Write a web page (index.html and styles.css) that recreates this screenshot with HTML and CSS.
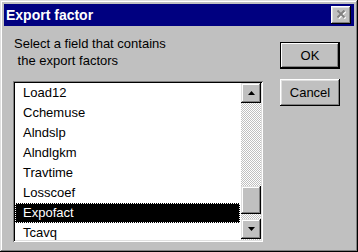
FILE: index.html
```html
<!DOCTYPE html>
<html lang="en">
<head>
    <meta charset="UTF-8">
    <title>Export factor</title>
    <link rel="stylesheet" href="styles.css">
</head>
<body>
    <div class="dialog">
        <div class="titlebar">
            <span class="title">Export factor</span>
            <button class="close">
                <svg width="10" height="9" viewBox="0 0 10 9">
                    <path d="M1.5 1.5 L8.5 8.5 M8.5 1.5 L1.5 8.5" stroke="#fff" stroke-width="2"/>
                    <path d="M0.5 0.5 L7.5 7.5 M7.5 0.5 L0.5 7.5" stroke="#808080" stroke-width="2"/>
                </svg>
            </button>
        </div>
        <div class="body">
            <div class="main">
                <div class="prompt">Select a field that contains<br>&nbsp;the export factors</div>
                <div class="list">
                    <div class="items">
                        <div class="item">Load12</div>
                        <div class="item">Cchemuse</div>
                        <div class="item">Alndslp</div>
                        <div class="item">Alndlgkm</div>
                        <div class="item">Travtime</div>
                        <div class="item">Losscoef</div>
                        <div class="item selected">Expofact</div>
                        <div class="item">Tcavq</div>
                    </div>
                    <div class="scrollbar">
                        <div class="sbtn">
                            <svg width="7" height="4" viewBox="0 0 7 4"><polygon points="3.5,0 7,4 0,4" fill="#000"/></svg>
                        </div>
                        <div class="track-top"></div>
                        <div class="thumb"></div>
                        <div class="track-bottom"></div>
                        <div class="sbtn">
                            <svg width="7" height="4" viewBox="0 0 7 4"><polygon points="0,0 7,0 3.5,4" fill="#000"/></svg>
                        </div>
                    </div>
                </div>
            </div>
            <div class="side">
                <button class="btn default">OK</button>
                <button class="btn">Cancel</button>
            </div>
        </div>
    </div>
</body>
</html>
```

FILE: styles.css
```css
* , *::after , *::before{
    box-sizing: border-box;
    margin: 0;
    padding: 0;
}
body{
    margin: 0;
    font-family: "Liberation Sans", Arial, sans-serif;
    font-size: 13px;
    color: #000;
}
.dialog{
    width: 358px;
    height: 252px;
    background-color: #c0c0c0;
    padding: 4px;
    box-shadow: inset -1px -1px #000, inset 1px 1px #dfdfdf, inset -2px -2px #808080, inset 2px 2px #fff;
}
.titlebar{
    height: 22px;
    background-color: #000080;
    display: flex;
    align-items: center;
    padding-left: 2px;
}
.title{
    color: #fff;
    font-weight: bold;
    font-size: 14px;
}
.close{
    margin-left: auto;
    margin-right: 3px;
    width: 20px;
    height: 18px;
    border: none;
    background-color: #c0c0c0;
    box-shadow: inset -1px -1px #000, inset 1px 1px #fff, inset -2px -2px #808080, inset 2px 2px #dfdfdf;
    display: flex;
    align-items: center;
    justify-content: center;
    padding: 0 0 1px 1px;
}
.body{
    display: flex;
    padding-left: 9px;
}
.main{
    width: 250px;
}
.prompt{
    margin: 9px 0 0 1px;
    height: 34px;
    line-height: 17px;
}
.list{
    margin-top: 12px;
    height: 161px;
    padding: 2px;
    background-color: #fff;
    box-shadow: inset 1px 1px #808080, inset -1px -1px #fff, inset 2px 2px #000, inset -2px -2px #dfdfdf;
    display: flex;
}
.items{
    flex: 1;
    overflow: hidden;
}
.item{
    height: 20px;
    line-height: 20px;
    padding-left: 8px;
    white-space: nowrap;
}
.item.selected{
    background-color: #000;
    color: #fff;
    border: 1px dotted #fff;
    padding-left: 7px;
    line-height: 18px;
    margin-right: 1px;
}
.scrollbar{
    width: 20px;
    display: flex;
    flex-direction: column;
    background: repeating-conic-gradient(#fff 0 25%, #c0c0c0 0 50%) 0 0 / 2px 2px;
}
.sbtn, .thumb{
    background-color: #c0c0c0;
    box-shadow: inset -1px -1px #000, inset 1px 1px #dfdfdf, inset -2px -2px #808080, inset 2px 2px #fff;
}
.sbtn{
    height: 20px;
    display: flex;
    align-items: center;
    justify-content: center;
}
.track-top{
    height: 83px;
}
.thumb{
    height: 28px;
}
.track-bottom{
    height: 5px;
}
.side{
    margin-left: 17px;
    padding-top: 16px;
    display: flex;
    flex-direction: column;
    gap: 10px;
}
.btn{
    width: 60px;
    height: 27px;
    border: none;
    background-color: #c0c0c0;
    font-family: "Liberation Sans", Arial, sans-serif;
    font-size: 13px;
    color: #000;
    box-shadow: inset -1px -1px #000, inset 1px 1px #fff, inset -2px -2px #808080, inset 2px 2px #dfdfdf;
}
.btn.default{
    box-shadow: inset 0 0 0 1px #000, inset -2px -2px #000, inset 2px 2px #fff, inset -3px -3px #808080;
}
```
